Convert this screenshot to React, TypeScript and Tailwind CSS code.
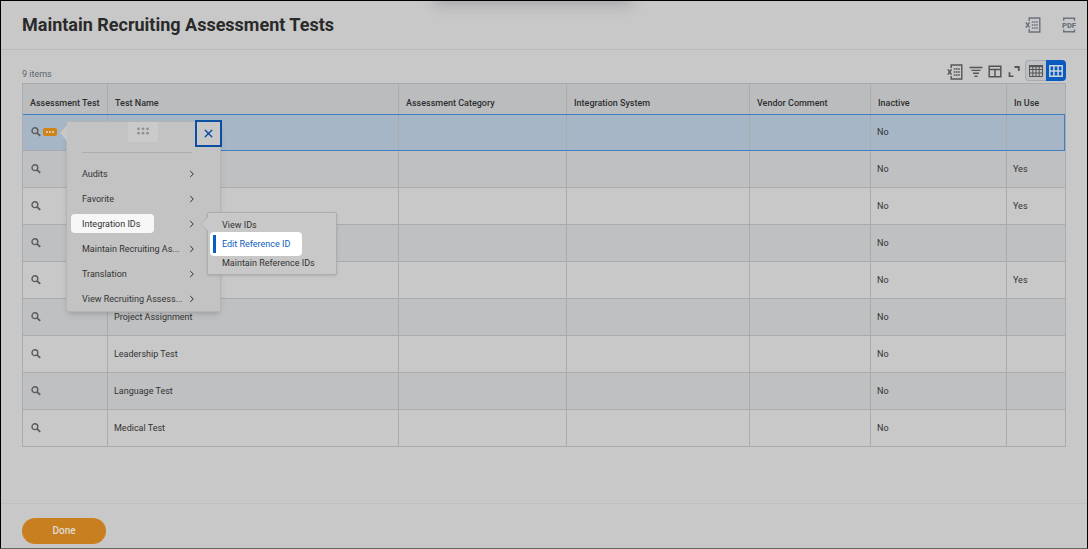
import { X } from 'lucide-react'
import clsx from 'clsx'

interface TestRow {
  name: string
  inactive: string
  inUse: string
}

const rows: TestRow[] = [
  { name: '', inactive: 'No', inUse: '' },
  { name: '', inactive: 'No', inUse: 'Yes' },
  { name: '', inactive: 'No', inUse: 'Yes' },
  { name: '', inactive: 'No', inUse: '' },
  { name: '', inactive: 'No', inUse: 'Yes' },
  { name: 'Project Assignment', inactive: 'No', inUse: '' },
  { name: 'Leadership Test', inactive: 'No', inUse: '' },
  { name: 'Language Test', inactive: 'No', inUse: '' },
  { name: 'Medical Test', inactive: 'No', inUse: '' },
]

const columns = [
  { label: 'Assessment Test', width: 'w-[85px]' },
  { label: 'Test Name', width: 'w-auto' },
  { label: 'Assessment Category', width: 'w-[168px]' },
  { label: 'Integration System', width: 'w-[183px]' },
  { label: 'Vendor Comment', width: 'w-[121px]' },
  { label: 'Inactive', width: 'w-[136px]' },
  { label: 'In Use', width: 'w-[59px]' },
]

const menuItems = [
  'Audits',
  'Favorite',
  'Integration IDs',
  'Maintain Recruiting As...',
  'Translation',
  'View Recruiting Assess...',
]

const subItems = ['View IDs', 'Edit Reference ID', 'Maintain Reference IDs']

function ExcelIcon() {
  return (
    <svg width="16" height="16" viewBox="0 0 16 16" fill="none" stroke="currentColor" strokeWidth="1.4">
      <path d="M4.2 4V1h10.6v14H4.2v-3" />
      <path d="M0.9 5.4l3.6 5.2M4.5 5.4L0.9 10.6" strokeWidth="1.5" />
      <path d="M6.8 5h1.6M9 5h1.6M11.2 5h1.6M6.8 8h1.6M9 8h1.6M11.2 8h1.6M6.8 11h1.6M9 11h1.6M11.2 11h1.6" />
    </svg>
  )
}

function PdfIcon() {
  return (
    <svg width="16" height="16" viewBox="0 0 16 16" fill="none" stroke="currentColor" strokeWidth="1.4">
      <path d="M2.7 3.8V1.2h10.8v2.6M2.7 12.4v2.4h10.8v-2.4" />
      <text x="8" y="10.8" textAnchor="middle" fontSize="7.6" fontWeight="900" fill="currentColor" stroke="none">
        PDF
      </text>
    </svg>
  )
}

function FilterIcon() {
  return (
    <svg width="14" height="14" viewBox="0 0 14 14" fill="none" stroke="currentColor" strokeWidth="1.4">
      <path d="M0.5 3.5h13M2.5 6.4h9M4 9.3h6M5.5 12.2h3" />
    </svg>
  )
}

function ColumnsIcon() {
  return (
    <svg width="14" height="14" viewBox="0 0 14 14" fill="none" stroke="currentColor" strokeWidth="1.5">
      <path d="M1.2 2.2h11.6v10.6H1.2zM1.2 5.5h11.6M7 5.5v7.3" />
    </svg>
  )
}

function ExpandIcon() {
  return (
    <svg width="12" height="12" viewBox="0 0 12 12" fill="none" stroke="currentColor" strokeWidth="1.8">
      <path d="M6.5 2h4.3v4M1.5 7.3v4h4" />
    </svg>
  )
}

function GridIcon() {
  return (
    <svg width="14" height="12" viewBox="0 0 14 12" fill="none" stroke="currentColor">
      <path d="M0.5 0.5h13v11h-13z" />
      <path d="M0 1.2h14" strokeWidth="2" />
      <path d="M0.5 4.5h13M0.5 8h13M3.8 1v10.5M7 1v10.5M10.2 1v10.5" />
    </svg>
  )
}

function CardGridIcon() {
  return (
    <svg width="14" height="12" viewBox="0 0 14 12" fill="none" stroke="currentColor" strokeWidth="1.5">
      <path d="M0.8 0.8h12.4v10.4H0.8zM0.8 6h12.4M4.9 0.8v10.4M9.1 0.8v10.4" />
    </svg>
  )
}

function SearchIcon() {
  return (
    <svg width="10" height="10" viewBox="0 0 10 10" fill="none" stroke="currentColor">
      <circle cx="3.9" cy="3.7" r="2.9" strokeWidth="1.4" />
      <path d="M6 5.8l3.2 3.1" strokeWidth="1.8" />
    </svg>
  )
}

function ChevronIcon() {
  return (
    <svg className="-ml-3 shrink-0" width="6" height="8" viewBox="0 0 6 8" fill="none" stroke="currentColor" strokeWidth="1">
      <path d="M1.2 1l3.1 3-3.1 3" />
    </svg>
  )
}

function SubMenu() {
  return (
    <div className="absolute left-[140px] top-px z-10 w-[130px] rounded-xs border border-[#adadad] bg-[#c8c8c8] py-0.5 shadow-sm">
      <svg className="absolute -left-2 top-1" width="8" height="14" viewBox="0 0 8 14">
        <path d="M8 0L1 7l7 7z" fill="#c8c8c8" />
        <path d="M7.5 0.5L1 7l6.5 6.5" fill="none" stroke="#b4b4b4" />
      </svg>
      <ul>
        {subItems.map((item) => (
          <li key={item} className="relative h-[19px]">
            {item === 'Edit Reference ID' ? (
              <button className="absolute -top-0.5 left-0.5 flex h-6 w-[92px] items-center rounded bg-white pl-[3px] text-[#0b5cc0]">
                <span className="mr-1.5 h-[18px] w-[3px] bg-[#0b5cc0]" />
                {item}
              </button>
            ) : (
              <button className="flex h-full w-full items-center whitespace-nowrap pl-3.5">{item}</button>
            )}
          </li>
        ))}
      </ul>
    </div>
  )
}

function RelatedActions() {
  return (
    <div className="absolute left-[43px] top-[7px] z-20 w-[155px] rounded-xs border border-[#b4b4b4] bg-[#c3c3c3] shadow-md">
      <svg className="absolute -left-2 top-[3px]" width="8" height="16" viewBox="0 0 8 16">
        <path d="M8 0L1 8l7 8z" fill="#c8c8c8" />
      </svg>
      <div className="mx-[15px] mb-2 flex h-[31px] w-[110px] justify-center border-b border-[#adadad]">
        <button aria-label="Move menu" className="ml-3 flex h-5 w-[30px] items-center justify-center bg-[#cacaca] pb-0.5 text-[#909090]">
          <svg width="12" height="8" viewBox="0 0 12 8" fill="currentColor">
            <circle cx="1.5" cy="1.8" r="1.4" />
            <circle cx="6" cy="1.8" r="1.4" />
            <circle cx="10.5" cy="1.8" r="1.4" />
            <circle cx="1.5" cy="6.2" r="1.4" />
            <circle cx="6" cy="6.2" r="1.4" />
            <circle cx="10.5" cy="6.2" r="1.4" />
          </svg>
        </button>
      </div>
      <button
        aria-label="Close"
        className="absolute -right-0.5 -top-0.5 flex size-[27px] items-center justify-center border-2 border-[#0c4ea2] bg-[#c8c8c8] text-[#0c4ea2]"
      >
        <X size={13} strokeWidth={2.5} />
      </button>
      <ul>
        {menuItems.map((item) => (
          <li key={item} className="relative h-[25px]">
            <button className="flex h-full w-32 items-center justify-between pl-1">
              <span
                className={clsx(
                  'whitespace-nowrap rounded px-[11px] pb-[3px] pt-[5px] leading-[11px]',
                  item === 'Integration IDs' && 'w-[83px] bg-[#f7f7f7] text-left'
                )}
              >
                {item}
              </span>
              <ChevronIcon />
            </button>
            {item === 'Integration IDs' && <SubMenu />}
          </li>
        ))}
      </ul>
    </div>
  )
}

export default function App() {
  return (
    <div className="relative flex min-h-screen flex-col overflow-hidden border border-black border-b-[#666] bg-[#c8c8c8] font-['Roboto',sans-serif] text-[9px] leading-[14px] text-[#333]">
      {/* shade cast by the bar above the page */}
      <div className="absolute -top-2 left-[49%] h-2 w-[190px] -translate-x-1/2 shadow-[0_0_14px_3px_#77728077]" />

      <header className="flex h-[49px] items-center justify-between border-b border-[#bababa] pl-[21px] pr-2.5">
        <h1 className="text-[18px] font-bold leading-6 text-[#2a2a2a]">Maintain Recruiting Assessment Tests</h1>
        <div className="flex items-center gap-5 text-[#6b727c]">
          <button aria-label="Export to Excel">
            <ExcelIcon />
          </button>
          <button aria-label="View as PDF">
            <PdfIcon />
          </button>
        </div>
      </header>

      <main className="flex-1 px-[21px] pt-2.5">
        <div className="flex h-[23px] items-start justify-between">
          <span className="pt-2 leading-3 text-[#5b6670]">9 items</span>
          <div className="flex items-center text-[#555]">
            <button aria-label="Export table" className="mr-1.5 pt-0.5">
              <ExcelIcon />
            </button>
            <button aria-label="Filter" className="mr-[5px]">
              <FilterIcon />
            </button>
            <button aria-label="Columns" className="mr-1.5">
              <ColumnsIcon />
            </button>
            <button aria-label="Full screen" className="mr-[5px]">
              <ExpandIcon />
            </button>
            <div className="flex h-[21px]">
              <button
                aria-label="Table view"
                className="flex w-[21px] items-center justify-center rounded-l border border-r-0 border-[#a5a9b0] bg-[#bfc1c5]"
              >
                <GridIcon />
              </button>
              <button
                aria-label="Grid view"
                className="flex w-5 items-center justify-center rounded-r bg-[#0a5abf] text-[#c8d4e2]"
              >
                <CardGridIcon />
              </button>
            </div>
          </div>
        </div>

        <table className="w-full table-fixed border-separate border-spacing-0 border-r border-t border-[#a9abac]">
          <thead>
            <tr className="h-[30px] bg-[#bbbcbe]">
              {columns.map((col) => (
                <th
                  key={col.label}
                  className={clsx(
                    'whitespace-nowrap border-l border-[#a9abac] pb-0 pl-[7px] pt-2 text-left font-medium text-[#2f2f2f]',
                    col.width
                  )}
                >
                  {col.label}
                </th>
              ))}
            </tr>
          </thead>
          <tbody>
            {rows.map((row, i) => (
              <tr
                key={i}
                className={clsx(
                  'h-[37px] *:border-b *:border-l *:border-[#a9abac] *:px-1.5 *:py-0',
                  i === 0 && 'bg-[#a6b6c6] outline outline-1 -outline-offset-1 outline-[#3f7fc4]',
                  i > 0 && i % 2 === 1 && 'bg-[#bfc0c2]'
                )}
              >
                <td className="relative">
                  <div className="flex items-center gap-0.5 pl-0.5">
                    <button aria-label="View test" className="text-[#5c5c5c]">
                      <SearchIcon />
                    </button>
                    {i === 0 && (
                      <button
                        aria-label="Related actions"
                        className="flex h-2 w-3.5 items-center justify-center gap-px rounded-xs bg-[#d08416]"
                      >
                        <span className="size-0.5 rounded-full bg-[#ddd]" />
                        <span className="size-0.5 rounded-full bg-[#ddd]" />
                        <span className="size-0.5 rounded-full bg-[#ddd]" />
                      </button>
                    )}
                  </div>
                  {i === 0 && <RelatedActions />}
                </td>
                <td>{row.name}</td>
                <td />
                <td />
                <td />
                <td>{row.inactive}</td>
                <td>{row.inUse}</td>
              </tr>
            ))}
          </tbody>
        </table>
      </main>

      <footer className="flex h-[45px] items-end border-t border-[#bfbfbf] px-[21px] pb-1">
        <button className="h-[26px] w-[84px] rounded-full bg-[#c87f20] text-[10px] font-medium text-[#e0dcd5]">
          Done
        </button>
      </footer>
    </div>
  )
}
